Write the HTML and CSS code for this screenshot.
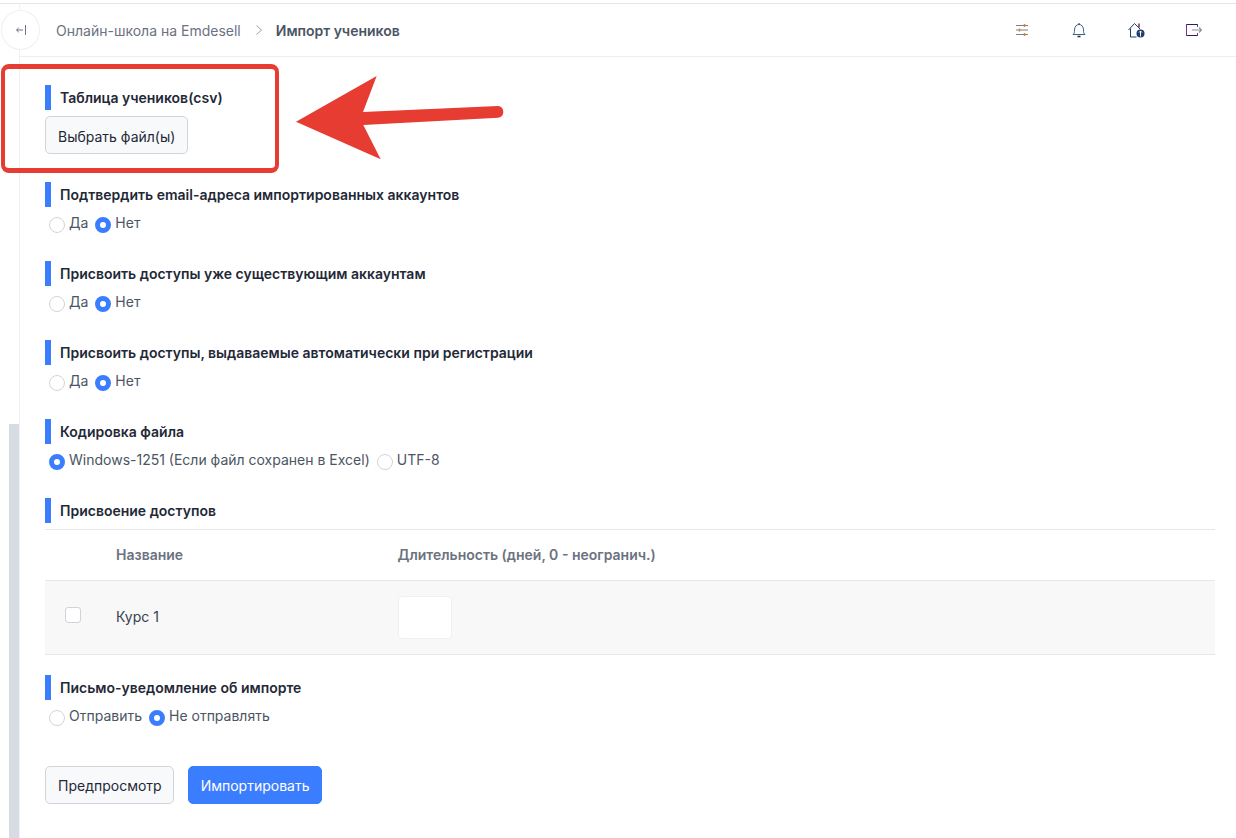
FILE: index.html
```html
<!DOCTYPE html>
<html>
<head>
  <title>Импорт учеников</title>
  <link rel="stylesheet" href="styles.css">
</head>
<body>
  <div class="page">
    <div class="sidebar">
      <div class="sidebar-thumb"></div>
    </div>
    <button class="toggle">
      <svg width="12" height="12" viewBox="0 0 12 12" fill="none" stroke="#6b7280" stroke-width="1">
        <path d="M8 6H1.500M3.800 3.800L1.500 6l2.300 2.200M10.500 1v10"/>
      </svg>
    </button>

    <div class="content">
      <div class="topbar">
        <div class="crumbs">
          <span>Онлайн-школа на Emdesell</span>
          <svg class="crumb-sep" width="8" height="12" viewBox="0 0 8 12" fill="none" stroke="#9ca3af" stroke-width="1">
            <path d="M1.500 1.500L6.500 6l-5 4.500"/>
          </svg>
          <b>Импорт учеников</b>
        </div>
        <div class="top-icons">
          <svg width="16" height="16" viewBox="0 0 16 16" fill="none" stroke="#7b8088" stroke-width="1.200">
            <path d="M2 3.500h12M2 8h12M2 12.500h12"/>
            <path d="M10.500 2v3M5.500 6.500v3M10.500 11v3" stroke="#c98a2b" stroke-width="1.500"/>
          </svg>
          <svg width="16" height="16" viewBox="0 0 16 16" fill="none" stroke="#1f2937" stroke-width="1">
            <path d="M2 12.500c1.200-1 1.500-2 1.500-4.500C3.500 4.500 5.500 2.500 8 2.500s4.500 2 4.500 5.500c0 2.500.3 3.500 1.500 4.500z" stroke="#3b5f8a"/>
            <path d="M6.500 14.500h3" stroke-width="1.500"/>
            <path d="M8 1v1.500"/>
          </svg>
          <svg width="17" height="16" viewBox="0 0 17 16" fill="none" stroke="#1f2937" stroke-width="1">
            <path d="M.5 8L6.500 1.500 12 7M2.500 6.500v8.500h6" stroke="#1e3a6e"/>
            <path d="M11 1.500v4" stroke="#7a2e4a" stroke-width="1.500"/>
            <circle cx="12.500" cy="11.500" r="4" fill="#1e3a6e" stroke="none"/>
            <path d="M12.500 14.500v-5.500M11 10.500L12.500 9 14 10.500" stroke="#fff"/>
          </svg>
          <svg width="16" height="16" viewBox="0 0 16 16" fill="none" stroke="#2d1f5e" stroke-width="1">
            <path d="M11.500 5V2.500H.5v11h11V11" stroke="#7a2e9a"/>
            <path d="M.5 2.500h11M.5 13.500h11"/>
            <path d="M6 8h9M13 5.500L15.500 8 13 10.500" stroke="#8a8f98" stroke-width="1.200"/>
          </svg>
        </div>
      </div>

      <form class="form">
        <div class="field field-file">
          <div class="field-title">Таблица учеников(csv)</div>
          <button type="button" class="btn">Выбрать файл(ы)</button>
        </div>

        <div class="field">
          <div class="field-title">Подтвердить email-адреса импортированных аккаунтов</div>
          <div class="radios">
            <span class="radio"></span><span class="radio-label">Да</span>
            <span class="radio checked"></span><span class="radio-label">Нет</span>
          </div>
        </div>

        <div class="field">
          <div class="field-title">Присвоить доступы уже существующим аккаунтам</div>
          <div class="radios">
            <span class="radio"></span><span class="radio-label">Да</span>
            <span class="radio checked"></span><span class="radio-label">Нет</span>
          </div>
        </div>

        <div class="field">
          <div class="field-title">Присвоить доступы, выдаваемые автоматически при регистрации</div>
          <div class="radios">
            <span class="radio"></span><span class="radio-label">Да</span>
            <span class="radio checked"></span><span class="radio-label">Нет</span>
          </div>
        </div>

        <div class="field">
          <div class="field-title">Кодировка файла</div>
          <div class="radios">
            <span class="radio checked"></span><span class="radio-label">Windows-1251 (Если файл сохранен в Excel)</span>
            <span class="radio"></span><span class="radio-label">UTF-8</span>
          </div>
        </div>

        <div class="field-table">
          <div class="field-title">Присвоение доступов</div>
          <div class="table">
            <div class="table-row table-head">
              <div class="cell-check"></div>
              <div class="cell-name">Название</div>
              <div>Длительность (дней, 0 - неогранич.)</div>
            </div>
            <div class="table-row table-body">
              <div class="cell-check"><span class="checkbox"></span></div>
              <div class="cell-name">Курс 1</div>
              <div class="days"></div>
            </div>
          </div>
        </div>

        <div class="field">
          <div class="field-title">Письмо-уведомление об импорте</div>
          <div class="radios">
            <span class="radio"></span><span class="radio-label">Отправить</span>
            <span class="radio checked"></span><span class="radio-label">Не отправлять</span>
          </div>
        </div>

        <div class="actions">
          <button type="button" class="btn btn-preview">Предпросмотр</button>
          <button type="button" class="btn btn-primary">Импортировать</button>
        </div>
      </form>
    </div>

    <!-- annotation on top of the screenshot -->
    <div class="mark-box"></div>
    <svg class="mark-arrow" width="214" height="88" viewBox="0 0 214 88">
      <path d="M2 47.700L82.700 2 69 38 204 32a5.900 5.900 0 0 1 .3 11.700L69.300 51 86.700 85.300z" fill="#e63c32"/>
    </svg>
  </div>
</body>
</html>
```

FILE: styles.css
```css
html,
body {
  margin: 0;
  padding: 0;
  height: 100%;
  overflow: hidden;
}

body {
  font-family: Inter, "Noto Sans", sans-serif;
  font-size: 14px;
  color: #374151;
  background-color: #fff;
}

.page {
  position: relative;
  display: flex;
  height: 838px;
  padding-top: 3px;
  box-sizing: border-box;
}

.page:before {
  content: "";
  position: absolute;
  left: 0;
  right: 0;
  top: 3px;
  height: 1px;
  background-color: #e5e5e5;
}

.sidebar {
  position: relative;
  width: 19px;
  flex-shrink: 0;
  border-right: 1px solid #eef0f4;
}

.sidebar-thumb {
  position: absolute;
  left: 9px;
  right: 0;
  top: 421px;
  bottom: 0;
  background-color: #d6dbe4;
}

.toggle {
  position: absolute;
  left: 1px;
  top: 10px;
  width: 39px;
  height: 40px;
  padding: 0;
  display: flex;
  align-items: center;
  justify-content: center;
  background-color: #fff;
  border: 1px solid #eef0f6;
  border-radius: 50%;
}

.content {
  flex: 1;
  min-width: 0;
}

.topbar {
  display: flex;
  align-items: center;
  justify-content: space-between;
  height: 52px;
  margin-top: 1px;
  padding: 0 34px 0 36px;
  border-bottom: 1px solid #eceef2;
}

.crumbs {
  display: flex;
  align-items: center;
  color: #6b7280;
  font-size: 14px;
}

.crumbs b {
  font-weight: 570;
  color: #4b5563;
}

.crumb-sep {
  margin: 0 13px 0 14px;
}

.top-icons {
  display: flex;
  align-items: center;
  gap: 41px;
}

.top-icons svg {
  display: block;
}

.form {
  padding: 28px 21px 0 25px;
}

.field {
  height: 79px;
}

.field-file {
  height: 97px;
}

.field-title {
  height: 25px;
  line-height: 25px;
  padding-left: 9px;
  border-left: 6px solid #3b7dff;
  font-size: 14px;
  font-weight: 590;
  color: #1f2937;
}

.field-file .btn {
  margin-top: 6px;
  padding-top: 2px;
}

.btn {
  height: 38px;
  padding: 0 12px;
  font-family: inherit;
  font-size: 14px;
  color: #1f2937;
  background-color: #f8f9fb;
  border: 1px solid #d1d5db;
  border-radius: 5px;
}

.btn-preview {
  padding-right: 11px;
}

.btn-primary {
  color: #fff;
  background-color: #3b7dff;
  border-color: #3b7dff;
}

.radios {
  display: flex;
  align-items: center;
  height: 16px;
  margin-top: 9px;
  padding-left: 4px;
}

.radio {
  width: 14px;
  height: 14px;
  margin-top: 1px;
  border: 1px solid #d1d5db;
  border-radius: 50%;
  background-color: #fff;
  flex-shrink: 0;
}

.radio.checked {
  width: 6px;
  height: 6px;
  border: 5px solid #3b7dff;
}

.radio-label {
  margin: -3px 7px 0 4px;
  color: #4b5563;
  white-space: nowrap;
}

.field-table {
  height: 177px;
}

.table {
  margin-top: 6px;
  border-top: 1px solid #e5e7eb;
}

.table-row {
  display: flex;
  align-items: center;
}

.table-head {
  height: 48px;
  padding-bottom: 2px;
  font-weight: 570;
  color: #6b7280;
  border-bottom: 1px solid #e5e7eb;
}

.table-body {
  height: 74px;
  padding-bottom: 2px;
  box-sizing: border-box;
  background-color: #f8f8f8;
  border-bottom: 1px solid #e5e7eb;
}

.cell-check {
  width: 71px;
  display: flex;
  padding-left: 20px;
  box-sizing: border-box;
}

.cell-name {
  width: 281.500px;
}

.checkbox {
  width: 14px;
  height: 14px;
  margin-top: -4px;
  background-color: #fff;
  border: 1px solid #cfd3da;
  border-radius: 3px;
}

.days {
  width: 52px;
  height: 41px;
  margin-top: 1px;
  background-color: #fff;
  border: 1px solid #f0f0f2;
  border-radius: 4px;
}

.actions {
  display: flex;
  gap: 14px;
  margin-top: 12px;
}

.mark-box {
  position: absolute;
  left: 1px;
  top: 64px;
  width: 270px;
  height: 99px;
  border-style: solid;
  border-color: #e63c32;
  border-width: 5px 4px;
  border-radius: 8px;
}

.mark-arrow {
  position: absolute;
  left: 294px;
  top: 74px;
}
```
